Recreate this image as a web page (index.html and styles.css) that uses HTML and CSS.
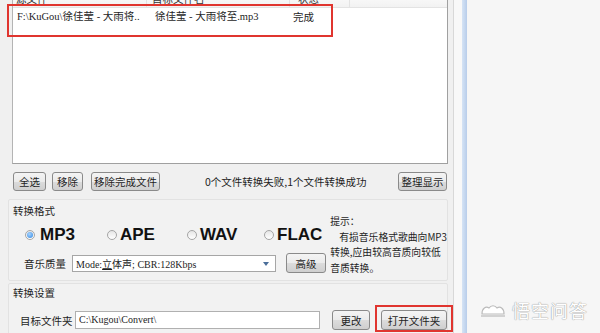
FILE: index.html
```html
<!DOCTYPE html>
<html lang="zh-CN">
  <head>
    <meta charset="UTF-8" />
    <title>格式转换</title>
    <link rel="stylesheet" href="styles.css">
  </head>
  <body>
    <div class="screen">
      <div class="app">
        <!-- 文件列表 -->
        <div class="list">
          <div class="list-head">
            <span class="c1">源文件</span>
            <span class="c2">目标文件名</span>
            <span class="c3">状态</span>
          </div>
          <div class="list-row">
            <span class="c1 mono">F:\KuGou\徐佳莹 - 大雨将..</span>
            <span class="c2 mono">徐佳莹 - 大雨将至.mp3</span>
            <span class="c3">完成</span>
          </div>
        </div>

        <div class="toolbar">
          <button class="btn b-all">全选</button>
          <button class="btn b-del">移除</button>
          <button class="btn b-done">移除完成文件</button>
          <span class="status">0个文件转换失败,1个文件转换成功</span>
          <button class="btn b-sort">整理显示</button>
        </div>

        <!-- 转换格式 -->
        <div class="group group-format">
          <div class="g-left">
            <div class="g-title">转换格式</div>
            <div class="radios">
              <label class="radio on"><i></i><b>MP3</b></label>
              <label class="radio"><i></i><b>APE</b></label>
              <label class="radio"><i></i><b>WAV</b></label>
              <label class="radio"><i></i><b>FLAC</b></label>
            </div>
            <div class="quality">
              <span class="q-label">音乐质量</span>
              <div class="combo">
                <span class="mono">Mode:<u>立</u>体声; CBR:128Kbps</span>
                <em class="arrow"></em>
              </div>
              <button class="btn b-adv">高级</button>
            </div>
          </div>
          <div class="hint">
            <p>提示：</p>
            <p class="indent">有损音乐格式歌曲向MP3</p>
            <p>转换,应由较高音质向较低</p>
            <p>音质转换。</p>
          </div>
        </div>

        <!-- 转换设置 -->
        <div class="group group-set">
          <div class="g-title">转换设置</div>
          <div class="target">
            <span class="t-label">目标文件夹</span>
            <div class="input mono">C:\Kugou\Convert\</div>
            <button class="btn b-change">更改</button>
            <button class="btn b-open">打开文件夹</button>
          </div>
        </div>
      </div>
      <div class="gap"></div>
      <div class="edge"></div>
      <div class="side">
        <div class="mark">
          <svg width="26" height="14" viewBox="0 0 26 14">
            <path d="M2 11 C2 5 6 3 9 5 C11 2 15 2 17 5 C20 3 24 5 24 11 Z" fill="#fff" stroke="#bbb" stroke-width="1.2"/>
            <path d="M1 13 H25" stroke="#bbb" stroke-width="1.2"/>
          </svg>
          <span>悟空问答</span>
        </div>
      </div>
    </div>
  </body>
</html>
```

FILE: styles.css
```css
* {
  margin: 0;
  padding: 0;
  box-sizing: border-box;
}
body {
  width: 600px;
  height: 333px;
  overflow: hidden;
  background: #f6f6f6;
  font-family: "Noto Sans CJK SC", sans-serif;
  font-size: 10.5px;
  color: #1e1e1e;
}
.screen {
  display: flex;
  height: 333px;
}
.app {
  width: 454px;
  background: #f0f0f0;
  border-right: 1px solid #d8d8d8;
  padding: 0 5px 0 12px;
}
.gap {
  width: 8px;
  background: #f8f8f8;
}
.edge {
  width: 5px;
  background: linear-gradient(90deg, #d6e4f5, #b8cdea);
}
.side {
  flex: 1;
  position: relative;
  background: #f6f6f6;
}
.mono {
  font-family: "Liberation Serif", "Noto Sans CJK SC", serif;
}

/* 列表 */
.list {
  margin-top: -11px;
  height: 175px;
  background: #fff;
  border: 1px solid #b4b4b4;
  border-right-color: #a0a0a0;
  border-bottom-color: #a0a0a0;
}
.list-head,
.list-row {
  display: grid;
  grid-template-columns: 134px 143px 1fr;
  white-space: nowrap;
}
.list-head {
  height: 18px;
  line-height: 18px;
  background: linear-gradient(#fff, #f2f2f2);
  border-bottom: 1px solid #e3e3e3;
  color: #333;
}
.list-head span {
  padding-left: 3px;
  border-right: 1px solid #e3e3e3;
}
.list-head .c2 {
  padding-left: 5px;
}
.list-head .c3 {
  padding-left: 8px;
  width: 60px;
}
.list-row {
  position: relative;
  height: 17px;
  line-height: 17px;
}
.list-row span {
  overflow: hidden;
}
.list-row .c1 {
  padding-left: 4px;
}
.list-row .c2 {
  padding-left: 8px;
}
.list-row .c3 {
  padding-left: 3px;
}
/* 红框标注 */
.list-row::after {
  content: "";
  position: absolute;
  left: -6px;
  top: -4px;
  width: 322px;
  height: 29px;
  border: 2px solid #e0352f;
}

/* 按钮 */
.btn {
  height: 19px;
  font-family: inherit;
  font-size: 10.5px;
  color: #1e1e1e;
  border: 1px solid #8a8a8a;
  border-radius: 3px;
  background: linear-gradient(#f4f4f4 0%, #ebebeb 50%, #dcdcdc 51%, #cfcfcf 100%);
  white-space: nowrap;
}
.toolbar {
  display: flex;
  align-items: center;
  height: 19px;
  margin-top: 8px;
}
.b-all {
  width: 33px;
  margin-left: 1px;
}
.b-del {
  width: 31px;
  margin-left: 6px;
}
.b-done {
  width: 69px;
  margin-left: 8px;
}
.status {
  margin-left: 45px;
  white-space: nowrap;
}
.b-sort {
  width: 49px;
  margin-left: auto;
  margin-right: 1px;
}

/* 分组 */
.group {
  margin-left: -4px;
  border: 1px solid #e2e2e2;
  border-radius: 2px;
  background: #f2f2f2;
}
.group-format {
  display: flex;
  height: 82px;
  margin-top: 8px;
  padding: 3px 0 0 4px;
}
.g-left {
  width: 315px;
}
.g-title {
  line-height: 16px;
  height: 16px;
}
.radios {
  display: grid;
  grid-template-columns: 82px 80px 77px auto;
  height: 18px;
  margin-top: 6px;
  padding-left: 12px;
}
.radio {
  display: flex;
  align-items: center;
}
.radio i {
  width: 10px;
  height: 10px;
  border-radius: 50%;
  border: 1px solid #a5a5a5;
  background: linear-gradient(#e6e6e6, #fff);
  position: relative;
}
.radio.on i::after {
  content: "";
  position: absolute;
  left: 1px;
  top: 1px;
  width: 6px;
  height: 6px;
  border-radius: 50%;
  background: radial-gradient(circle at 40% 35%, #a8d4ff, #2f86e0);
}
.radio b {
  font-family: "Liberation Sans", Arial, sans-serif;
  font-size: 17px;
  margin-left: 3px;
  color: #111;
}
.radio.on b {
  margin-left: 5px;
}
.quality {
  display: flex;
  align-items: center;
  height: 20px;
  margin-top: 10px;
  padding-left: 11px;
}
.q-label {
  width: 48px;
}
.combo {
  position: relative;
  width: 204px;
  height: 17px;
  line-height: 15px;
  padding-left: 3px;
  background: #fff;
  border: 1px solid #a6a6a6;
  font-size: 10px;
}
.combo u {
  text-decoration: underline;
}
.arrow {
  position: absolute;
  right: 6px;
  top: 6px;
  border-left: 3px solid transparent;
  border-right: 3px solid transparent;
  border-top: 4px solid #4a6e9a;
}
.b-adv {
  width: 40px;
  height: 20px;
  margin-left: 10px;
}
.hint {
  margin-left: 4px;
  padding-top: 11px;
  line-height: 15.5px;
  white-space: nowrap;
  font-size: 9.8px;
}
.hint .indent {
  padding-left: 9px;
}

.group-set {
  margin-top: 2px;
  height: 60px;
  padding: 1px 0 0 4px;
}
.target {
  display: flex;
  align-items: center;
  height: 20px;
  margin-top: 9px;
  padding-left: 7px;
}
.t-label {
  width: 55px;
  white-space: nowrap;
}
.input {
  width: 245px;
  height: 18px;
  line-height: 16px;
  padding-left: 3px;
  background: #fff;
  border: 1px solid #b0b0b0;
  font-size: 10px;
}
.b-change {
  width: 38px;
  height: 20px;
  margin-left: 12px;
}
.b-open {
  position: relative;
  width: 66px;
  height: 20px;
  margin-left: 11px;
}
.b-open::after {
  content: "";
  position: absolute;
  left: -7px;
  right: -7px;
  top: -6px;
  bottom: -3px;
  border: 2px solid #e0352f;
}

/* 水印 */
.mark {
  position: absolute;
  right: 12px;
  bottom: 10px;
  display: flex;
  align-items: center;
  gap: 6px;
}
.mark span {
  font-size: 18px;
  letter-spacing: 1px;
  color: #fff;
  text-shadow: 0 0 1px #9a9a9a, 0 0 1px #9a9a9a;
}
```
